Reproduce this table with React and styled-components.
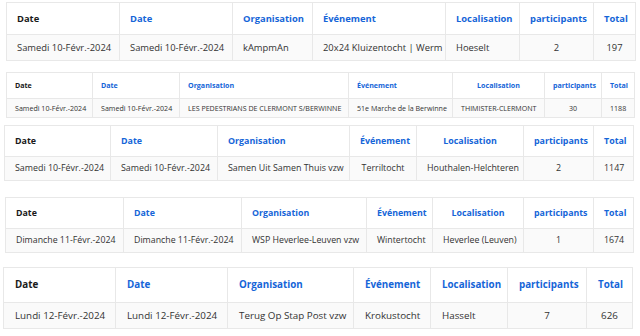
import React from 'react';
import styled, { createGlobalStyle } from 'styled-components';

const GlobalStyle = createGlobalStyle`
  html, body {
    margin: 0;
    padding: 0;
    background: #fff;
  }
  body {
    font-family: "Open Sans", "Noto Sans", sans-serif;
    width: 640px;
    height: 336px;
    overflow: hidden;
  }
`;

const Page = styled.div`
  display: flex;
  flex-direction: column;
  padding-top: 2px;
`;

const Table = styled.table`
  border-collapse: collapse;
  table-layout: fixed;
  margin: ${({ $top }) => $top}px 0 0 ${({ $left }) => $left}px;
  width: ${({ $width }) => $width}px;
  font-size: ${({ $font }) => $font}px;
  line-height: 1.2;
  border: 1px solid #e8e8e8;
`;

const HeadCell = styled.th`
  height: ${({ $h }) => $h - 1}px;
  padding: 0 ${({ $pad }) => $pad}px;
  text-align: ${({ $align }) => $align};
  font-weight: 700;
  color: ${({ $first }) => ($first ? '#1a1a1a' : '#1565d8')};
  border: 1px solid #e8e8e8;
  background: #fff;
  white-space: nowrap;
  overflow: hidden;
`;

const BodyCell = styled.td`
  height: ${({ $h }) => $h - 2}px;
  padding: 0 ${({ $pad }) => $pad}px;
  text-align: ${({ $align }) => $align};
  color: #333;
  border: 1px solid #e8e8e8;
  background: #fafafa;
  white-space: nowrap;
  overflow: hidden;
`;

const headers = ['Date', 'Date', 'Organisation', 'Événement', 'Localisation', 'participants', 'Total'];

const tables = [
  {
    top: 0, left: 6, font: 9.4, pad: 10, head: 32, body: 27,
    cols: [113, 113, 80, 133, 74, 74, 42],
    headAlign: 'LLLLCCC', bodyAlign: 'LLLLLCC',
    row: ['Samedi 10-Févr.-2024', 'Samedi 10-Févr.-2024', 'kAmpmAn', '20x24 Kluizentocht | Werm', 'Hoeselt', '2', '197'],
  },
  {
    top: 11, left: 6, font: 7.1, pad: 8, head: 26, body: 20,
    cols: [86, 87, 169, 104, 92, 57, 33],
    headAlign: 'LLLLCCC', bodyAlign: 'LLLLCCC',
    row: ['Samedi 10-Févr.-2024', 'Samedi 10-Févr.-2024', 'LES PEDESTRIANS DE CLERMONT S/BERWINNE', '51e Marche de la Berwinne', 'THIMISTER-CLERMONT', '30', '1188'],
  },
  {
    top: 7, left: 4, font: 8.9, pad: 10, head: 31, body: 25,
    cols: [106, 107, 132, 67, 107, 70, 40],
    headAlign: 'LLLCCCC', bodyAlign: 'LLLCCCC',
    row: ['Samedi 10-Févr.-2024', 'Samedi 10-Févr.-2024', 'Samen Uit Samen Thuis vzw', 'Terriltocht', 'Houthalen-Helchteren', '2', '1147'],
  },
  {
    top: 16, left: 5, font: 8.8, pad: 10, head: 31, body: 25,
    cols: [118, 118, 125, 66, 91, 70, 40],
    headAlign: 'LLLCCCC', bodyAlign: 'LLLCCCC',
    row: ['Dimanche 11-Févr.-2024', 'Dimanche 11-Févr.-2024', 'WSP Heverlee-Leuven vzw', 'Wintertocht', 'Heverlee (Leuven)', '1', '1674'],
  },
  {
    top: 14, left: 3, font: 9.8, pad: 11, head: 35, body: 27,
    cols: [112, 112, 126, 77, 77, 79, 46],
    headAlign: 'LLLCCCC', bodyAlign: 'LLLCLCC',
    row: ['Lundi 12-Févr.-2024', 'Lundi 12-Févr.-2024', 'Terug Op Stap Post vzw', 'Krokustocht', 'Hasselt', '7', '626'],
  },
];

const alignOf = (code) => (code === 'C' ? 'center' : 'left');

const EventTable = ({ t }) => {
  const width = t.cols.reduce((a, b) => a + b, 0);
  return (
    <Table $top={t.top} $left={t.left} $width={width} $font={t.font}>
      <colgroup>
        {t.cols.map((w, i) => (
          <col key={i} style={{ width: w }} />
        ))}
      </colgroup>
      <thead>
        <tr>
          {headers.map((h, i) => (
            <HeadCell key={i} $h={t.head} $pad={t.pad} $align={alignOf(t.headAlign[i])} $first={i === 0}>
              {h}
            </HeadCell>
          ))}
        </tr>
      </thead>
      <tbody>
        <tr>
          {t.row.map((v, i) => (
            <BodyCell key={i} $h={t.body} $pad={t.pad} $align={alignOf(t.bodyAlign[i])}>
              {v}
            </BodyCell>
          ))}
        </tr>
      </tbody>
    </Table>
  );
};

const App = () => (
  <>
    <GlobalStyle />
    <Page>
      {tables.map((t, i) => (
        <EventTable key={i} t={t} />
      ))}
    </Page>
  </>
);

export default App;
